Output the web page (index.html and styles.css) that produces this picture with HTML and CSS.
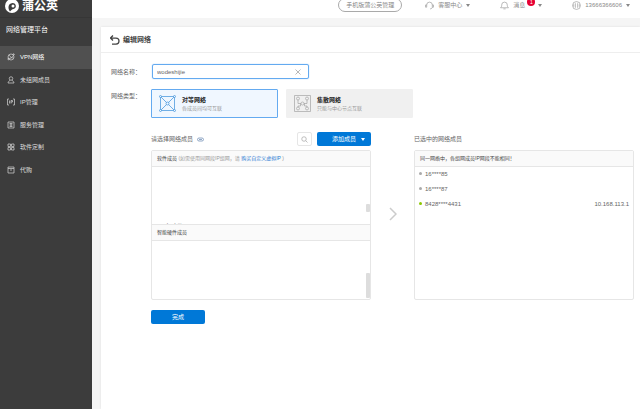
FILE: index.html
```html
<!DOCTYPE html>
<html lang="zh-CN">

<head>
    <meta charset="UTF-8">
    <meta name="viewport" content="width=device-width, initial-scale=1.0">
    <title>网络管理平台</title>
    <link rel="stylesheet" href="styles.css">
</head>

<body>
    <div class="layout">
        <aside class="sidebar">
            <div class="logo">
                <svg width="14" height="14" viewBox="0 0 14 14">
                    <circle cx="7" cy="7" r="7" fill="#fff"/>
                    <path d="M5 12.500C2.500 9.500 3 4.500 7.500 4c4 0 4.500 5.500 1 6-1.500.2-2 1-3.500 2.500z" fill="#3c3c3c"/>
                    <circle cx="8" cy="7" r="1.500" fill="#fff"/>
                </svg>
                <span>蒲公英</span>
            </div>
            <h2>网络管理平台</h2>
            <nav class="menu">
                <a href="#" class="active">
                    <svg class="icon" viewBox="0 0 16 16"><circle cx="8" cy="8" r="6"/><path d="M2 11c5 1 9-2 12-8M4 4c2 4 6 6 9 6"/><circle cx="13" cy="3" r="1.500"/><circle cx="3" cy="12" r="1.500"/></svg>
                    VPN网络
                </a>
                <a href="#">
                    <svg class="icon" viewBox="0 0 16 16"><circle cx="8" cy="5" r="3.500"/><path d="M6 8c0 2-4 2-4 6h12c0-4-4-4-4-6"/></svg>
                    未组网成员
                </a>
                <a href="#">
                    <svg class="icon" viewBox="0 0 16 16"><path d="M4 2H1v12h3M12 2h3v12h-3M5 5v6M8 11V5h3v3H8"/></svg>
                    IP管理
                </a>
                <a href="#">
                    <svg class="icon" viewBox="0 0 16 16"><path d="M2 2h12v12H2zM5 5h6M5 8h6M8 5v6M5 11h6"/></svg>
                    服务管理
                </a>
                <a href="#">
                    <svg class="icon" viewBox="0 0 16 16"><path d="M2 2h5v5H2zM9 2h5v5H9zM2 9h5v5H2zM9 9h5v5H9z"/></svg>
                    软件定制
                </a>
                <a href="#">
                    <svg class="icon" viewBox="0 0 16 16"><path d="M2 2h12v12H2zM2 5h12M6 8h4"/></svg>
                    代购
                </a>
            </nav>
        </aside>

        <div class="content">
            <header class="topbar">
                <a href="#" class="pill">手机版蒲公英管理</a>
                <a href="#" class="top-link service">
                    <svg class="top-icon" viewBox="0 0 16 16"><path d="M3 11V7a5 5 0 0 1 10 0v4c0 2-2 3-4 3M3 7H1v4h2M13 7h2v4h-2"/></svg>
                    客服中心<i class="caret"></i>
                </a>
                <a href="#" class="top-link news">
                    <svg class="top-icon" viewBox="0 0 16 16"><path d="M1 12h14c-2-2-2-3-2-5a5 5 0 0 0-10 0c0 2 0 3-2 5zM6 14h4"/></svg>
                    消息<span class="badge">1</span><i class="caret"></i>
                </a>
                <a href="#" class="top-link account">
                    <svg class="top-icon" viewBox="0 0 16 16"><circle cx="8" cy="8" r="7"/><path d="M6 4v8M10 4v8M3 6v4M13 6v4"/></svg>
                    13666366606<i class="caret"></i>
                </a>
            </header>

            <main class="panel">
                <div class="panel-title">
                    <svg width="10" height="10" viewBox="0 0 20 20"><path d="M6 1L1 6l5 5M1 6h11a6 6 0 0 1 0 12H4" fill="none" stroke="#444" stroke-width="2.500"/></svg>
                    <h1>编辑网络</h1>
                </div>

                <form class="form">
                    <div class="form-row">
                        <label for="netName">网络名称：</label>
                        <div class="name-box">
                            <input type="text" id="netName" value="wodeshijie">
                            <button type="button" class="clear" aria-label="清除">
                                <svg width="6" height="6" viewBox="0 0 6 6"><path d="M.5.5l5 5M5.500.5l-5 5" stroke="#999" stroke-width=".7"/></svg>
                            </button>
                        </div>
                    </div>

                    <div class="form-row type-row">
                        <span class="label">网络类型：</span>
                        <div class="types">
                            <button type="button" class="type selected">
                                <svg width="17" height="17" viewBox="0 0 34 34"><path d="M3 3h28v28H3zM3 3l28 28M31 3L3 31"/><g class="nodes"><circle cx="3" cy="3" r="2"/><circle cx="31" cy="3" r="2"/><circle cx="3" cy="31" r="2"/><circle cx="31" cy="31" r="2"/><circle cx="17" cy="17" r="3"/></g></svg>
                                <span><strong>对等网络</strong><small>各成员间均可互联</small></span>
                            </button>
                            <button type="button" class="type">
                                <svg width="17" height="17" viewBox="0 0 34 34"><path d="M1 1h32v32H1zM8 9v8h18V9M8 26v-4h5v-5M26 26v-4h-5v-5"/><g class="nodes"><circle cx="8" cy="7" r="3"/><circle cx="26" cy="7" r="3"/><circle cx="8" cy="27" r="3"/><circle cx="26" cy="27" r="3"/><circle cx="17" cy="17" r="3"/></g></svg>
                                <span><strong>集散网络</strong><small>只能与中心节点互联</small></span>
                            </button>
                        </div>
                    </div>

                    <div class="members">
                        <section class="column">
                            <div class="column-head">
                                <h3>请选择网络成员</h3>
                                <svg class="eye" width="7" height="5" viewBox="0 0 14 10"><path d="M4 2h6a3 3 0 0 1 0 6H4a3 3 0 0 1 0-6zM4 5h6"/></svg>
                                <button type="button" class="search" aria-label="搜索">
                                    <svg width="7" height="7" viewBox="0 0 14 14"><circle cx="6" cy="6" r="4.500"/><path d="M9.500 9.500L13 13"/></svg>
                                </button>
                                <button type="button" class="primary add">添加成员<i class="caret"></i></button>
                            </div>
                            <div class="box">
                                <div class="box-head">软件成员 <span class="hint">(如需使用同网段IP组网，请 <a href="#">购买自定义虚拟IP</a> )</span></div>
                                <div class="list soft">
                                    <div class="member">wodeshijie</div>
                                    <i class="thumb"></i>
                                </div>
                                <div class="box-head second">智能硬件成员</div>
                                <div class="list hard"><i class="thumb"></i></div>
                            </div>
                        </section>

                        <svg class="arrow" width="8" height="14" viewBox="0 0 8 14"><path d="M1 1l6 6-6 6"/></svg>

                        <section class="column">
                            <div class="column-head">
                                <h3>已选中的网络成员</h3>
                            </div>
                            <div class="box">
                                <div class="box-head">同一网络中，各组网成员IP网段不能相同！</div>
                                <ul class="chosen">
                                    <li>16****85</li>
                                    <li>16****87</li>
                                    <li class="online">8428****4431<span class="ip">10.168.113.1</span></li>
                                </ul>
                            </div>
                        </section>
                    </div>

                    <button type="button" class="primary done">完成</button>
                </form>
            </main>
        </div>
    </div>
</body>

</html>
```
FILE: styles.css
```css
* {
    box-sizing: border-box;
}

body {
    margin: 0;
    font-family: "Liberation Sans", "Noto Sans CJK SC", sans-serif;
    font-size: 6px;
    line-height: 10px;
    color: #666;
    background: #f5f5f5;
}

a {
    color: inherit;
    text-decoration: none;
}

button,
input {
    font: inherit;
    color: inherit;
    margin: 0;
    padding: 0;
}

h1,
h2,
h3 {
    margin: 0;
    font-weight: normal;
}

.layout {
    display: flex;
    min-height: 100vh;
}

/* 左侧菜单 */
.sidebar {
    flex: 0 0 92px;
    background: #3c3c3c;
    color: #ddd;
}

.logo {
    display: flex;
    align-items: center;
    gap: 3px;
    height: 24px;
    margin-top: -6px;
    padding-left: 5px;
    border-bottom: 1px solid #363636;
    color: #fff;
    font-size: 12px;
    font-weight: bold;
}

.sidebar h2 {
    padding-left: 6px;
    font-size: 7px;
    line-height: 24px;
    height: 28px;
    color: #fff;
}

.menu {
    display: grid;
    grid-auto-rows: 1fr;
    height: 135px;
}

.menu a {
    display: flex;
    align-items: center;
    gap: 5px;
    padding-left: 7px;
}

.menu .active {
    background: #505050;
    color: #fff;
}

.icon {
    width: 8px;
    height: 8px;
    fill: none;
    stroke: #ccc;
    stroke-width: 1.5;
}

/* 顶部栏 */
.content {
    flex: 1;
    min-width: 0;
    display: flex;
    flex-direction: column;
}

.topbar {
    display: flex;
    align-items: center;
    justify-content: flex-end;
    height: 26px;
    margin-top: -8px;
    padding-right: 10px;
    background: #fff;
    color: #888;
}

.pill {
    padding: 1px 7px;
    border: 1px solid #aaa;
    border-radius: 7px;
}

.top-link {
    display: flex;
    align-items: center;
    gap: 4px;
    margin-left: 30px;
}

.service {
    margin-left: 23px;
}

.top-icon {
    width: 9px;
    height: 9px;
    fill: none;
    stroke: #999;
    stroke-width: 1.2;
}

.caret {
    border: 2px solid transparent;
    border-top: 3px solid #888;
    border-bottom: 0;
}

.news {
    position: relative;
}

.news .caret {
    margin-left: 9px;
}

.badge {
    position: absolute;
    top: -2px;
    right: 7px;
    width: 8px;
    height: 8px;
    border-radius: 50%;
    background: #e60033;
    color: #fff;
    font-size: 5px;
    line-height: 8px;
    text-align: center;
}

/* 编辑面板 */
.panel {
    flex: 1;
    margin: 9px 0 0 9px;
    background: #fff;
    box-shadow: 0 0 2px #ddd;
}

.panel-title {
    display: flex;
    align-items: center;
    gap: 3px;
    height: 26px;
    padding-left: 9px;
    border-bottom: 1px solid #eee;
}

.panel-title h1 {
    font-size: 7px;
    font-weight: bold;
    color: #444;
}

.form {
    padding: 11px 6px 0 10px;
}

.form-row {
    display: flex;
    align-items: center;
}

.form-row label,
.form-row .label {
    flex: 0 0 40px;
}

.name-box {
    display: flex;
    align-items: center;
    width: 157px;
    height: 15px;
    margin-left: 1px;
    padding: 0 7px 0 4px;
    border: 1px solid #64aaf0;
    border-radius: 2px;
    box-shadow: 0 0 1px #64aaf0;
}

.name-box input {
    flex: 1;
    min-width: 0;
    border: 0;
    outline: 0;
    background: none;
}

.clear {
    display: flex;
    border: 0;
    background: none;
}

.type-row {
    align-items: flex-start;
    margin-top: 10px;
}

.type-row .label {
    padding-top: 2px;
}

.types {
    display: flex;
    gap: 8px;
}

.type {
    display: flex;
    align-items: center;
    gap: 6px;
    width: 127px;
    height: 29px;
    padding-left: 7px;
    border: 1px solid #f0f0f0;
    border-radius: 1px;
    background: #f0f0f0;
    text-align: left;
    line-height: 8px;
}

.type svg {
    fill: none;
    stroke: #aaa;
    stroke-width: 1.5;
}

.type .nodes {
    fill: #f0f0f0;
}

.type.selected {
    border-color: #64aaf0;
    background: #f0f7ff;
}

.selected svg {
    stroke: #4696dc;
}

.selected .nodes {
    fill: #f0f7ff;
}

.type strong,
.type small {
    display: block;
}

.type strong {
    color: #222;
}

.type small {
    font-size: 5px;
    color: #999;
}

/* 成员选择 */
.members {
    display: flex;
    margin: 14px 0 0 40px;
}

.column {
    flex: 1;
    min-width: 0;
}

.column-head {
    display: flex;
    align-items: center;
    height: 14px;
    margin-bottom: 4px;
}

.column-head h3 {
    font-size: 6px;
}

.eye {
    margin-left: 4px;
    fill: none;
    stroke: #6e8cb4;
    stroke-width: 1.5;
}

.search {
    display: flex;
    align-items: center;
    justify-content: center;
    width: 15px;
    height: 14px;
    margin-left: auto;
    border: 1px solid #e6e6e6;
    border-radius: 2px;
    background: #fff;
}

.search svg {
    fill: none;
    stroke: #aaa;
    stroke-width: 1.5;
}

.primary {
    width: 54px;
    height: 14px;
    border: 0;
    border-radius: 2px;
    background: #0078d7;
    color: #fff;
}

.add {
    display: flex;
    align-items: center;
    justify-content: flex-end;
    gap: 5px;
    margin-left: 5px;
    padding-right: 6px;
}

.add .caret {
    border-top-color: #fff;
}

.box {
    height: 150px;
    border: 1px solid #e6e6e6;
    border-radius: 2px;
}

.box-head {
    height: 16px;
    padding-left: 5px;
    border-bottom: 1px solid #e6e6e6;
    background: #fafafa;
    font-size: 5px;
    line-height: 15px;
    color: #444;
    white-space: nowrap;
}

.box-head.second {
    height: 17px;
    border-top: 1px solid #e6e6e6;
}

.hint {
    color: #999;
}

.hint a {
    color: #2878d2;
}

.list {
    position: relative;
    height: 57px;
    overflow: hidden;
}

/* 列表滚动后只露出一行的顶部 */
.member {
    margin-top: 53px;
    padding-left: 5px;
    color: #888;
}

.thumb {
    position: absolute;
    right: 0;
    bottom: 12px;
    width: 4px;
    height: 8px;
    border-radius: 1px;
    background: #ddd;
}

.hard .thumb {
    bottom: 0;
    height: 25px;
}

.arrow {
    flex: none;
    margin: 75px 17px 0 18px;
    fill: none;
    stroke: #ccc;
    stroke-width: 1.5;
}

.chosen {
    margin: 0;
    padding: 0 4px;
    list-style: none;
}

.chosen li {
    display: flex;
    align-items: center;
    height: 15px;
    padding-bottom: 2px;
}

.chosen li::before {
    content: "";
    width: 3px;
    height: 3px;
    margin-right: 3px;
    border-radius: 50%;
    background: #aaa;
}

.chosen .online::before {
    background: #8cc800;
}

.ip {
    margin-left: auto;
}

.done {
    display: block;
    margin: 10px 0 0 40px;
}
```
